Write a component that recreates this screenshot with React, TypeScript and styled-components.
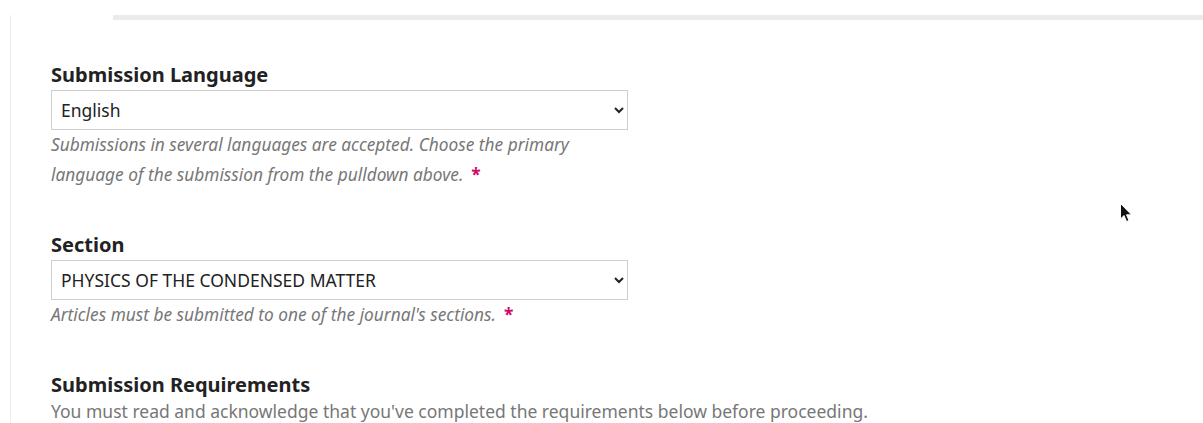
import React from 'react';
import styled, { createGlobalStyle } from 'styled-components';

const GlobalStyle = createGlobalStyle`
  html, body {
    margin: 0;
    padding: 0;
    background: #fff;
  }
  body {
    font-family: 'Noto Sans', 'Liberation Sans', sans-serif;
    color: #222;
  }
`;

const Page = styled.div`
  position: relative;
  height: 423px;
  overflow: hidden;
  padding-top: 15px;
  box-sizing: border-box;
`;

const Frame = styled.div`
  margin-left: 10px;
  border-left: 1px solid #ececec;
  min-height: 420px;
`;

const TopRule = styled.div`
  margin-left: 102px;
  height: 5px;
  background: #e9ebec;
`;

const Form = styled.form`
  padding: 44px 0 0 40px;
`;

const Field = styled.div`
  margin-bottom: 44px;
`;

const Label = styled.label`
  display: block;
  font-size: 20px;
  font-weight: 700;
  line-height: 22px;
  color: #222;
  margin-bottom: 4px;
`;

const Select = styled.select`
  display: block;
  width: 577px;
  height: 40px;
  box-sizing: border-box;
  padding: 0 14px 0 5px;
  border: 1px solid #cfcfcf;
  border-radius: 0;
  background: #fff;
  font-family: 'Noto Sans', 'Liberation Sans', sans-serif;
  font-size: 17.5px;
  color: #222;
`;

const Help = styled.div<{ $width?: number }>`
  font-size: 17.3px;
  font-style: italic;
  line-height: 30px;
  color: #777;
  max-width: ${({ $width }) => ($width ? `${$width}px` : 'none')};
`;

const Required = styled.span`
  color: #d00a6c;
  font-style: normal;
  font-weight: 700;
  margin-left: 8px;
`;

const Intro = styled.p`
  margin: 1px 0 0;
  font-size: 17.5px;
  line-height: 22px;
  color: #777;
`;

const Pointer = styled.svg`
  position: absolute;
  left: 1119px;
  top: 202px;
`;

export default function App() {
  return (
    <>
      <GlobalStyle />
      <Page>
        <Frame>
          <TopRule />
          <Form>
            <Field>
              <Label htmlFor="locale">Submission Language</Label>
              <Select id="locale" defaultValue="en">
                <option value="en">English</option>
              </Select>
              <Help $width={545}>
                Submissions in several languages are accepted. Choose the primary language of the
                submission from the pulldown above.
                <Required>*</Required>
              </Help>
            </Field>
            <Field>
              <Label htmlFor="section">Section</Label>
              <Select id="section" defaultValue="cm">
                <option value="cm">PHYSICS OF THE CONDENSED MATTER</option>
              </Select>
              <Help>
                Articles must be submitted to one of the journal's sections.
                <Required>*</Required>
              </Help>
            </Field>
            <div>
              <Label as="div">Submission Requirements</Label>
              <Intro>
                You must read and acknowledge that you've completed the requirements below before
                proceeding.
              </Intro>
            </div>
          </Form>
        </Frame>
        <Pointer width="14" height="22" viewBox="0 0 14 22">
          <path
            d="M1.5 1.5 L1.5 17 L5 13.5 L7.5 19.5 L10 18.5 L7.5 12.8 L12.5 12.8 Z"
            fill="#111"
            stroke="#fff"
            strokeWidth="1"
            strokeLinejoin="round"
          />
        </Pointer>
      </Page>
    </>
  );
}
